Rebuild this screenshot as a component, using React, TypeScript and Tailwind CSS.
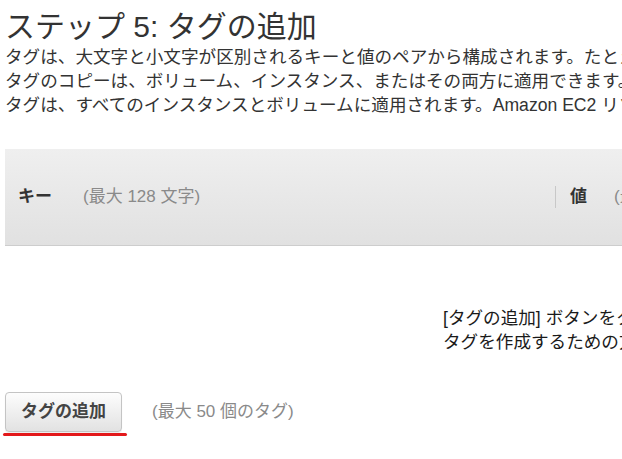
import React from 'react';

const font = { fontFamily: '"Liberation Sans", "Noto Sans CJK JP", sans-serif' };

const App: React.FC = () => {
  return (
    <div
      className="w-[622px] h-[459px] overflow-hidden bg-white text-[#333]"
      style={font}
    >
      {/* Heading */}
      <h1 className="pt-[9px] pl-[5px] text-[30px] leading-[36px] font-normal whitespace-nowrap text-[#333]">
        ステップ 5: タグの追加
      </h1>

      {/* Description */}
      <div className="pl-[5px] text-[17.6px] leading-[24px] whitespace-nowrap">
        <p>タグは、大文字と小文字が区別されるキーと値のペアから構成されます。たとえば、キーが Name で値が Webserver のタグを定義できます。</p>
        <p>タグのコピーは、ボリューム、インスタンス、またはその両方に適用できます。</p>
        <p>タグは、すべてのインスタンスとボリュームに適用されます。Amazon EC2 リソースのタグ付けの詳細をご覧ください。</p>
      </div>

      {/* Table header */}
      <div className="mt-[32px] ml-[5px] w-[1200px] h-[97px] flex items-center bg-linear-to-b from-[#efefef] to-[#e1e1e1] border-b border-[#cdcdcd] text-[17px] whitespace-nowrap">
        <div className="w-[550px] flex-none flex items-center pl-[13px]">
          <span className="font-bold text-[#333]">キー</span>
          <span className="ml-[31px] text-[#8a8a8a]">(最大 128 文字)</span>
        </div>
        <div className="h-[22px] border-l border-[#c8c8c8]" />
        <span className="ml-[14px] font-bold text-[#333]">値</span>
        <span className="ml-[27px] text-[#8a8a8a]">(最大 256 文字)</span>
      </div>

      {/* Empty state */}
      <div className="mt-[60px] pl-[443px] text-[17.6px] leading-[24px] whitespace-nowrap text-[#1a1a1a]">
        <p>[タグの追加] ボタンをクリックしてタグを追加するか、</p>
        <p>タグを作成するための方法をご覧ください。</p>
      </div>

      {/* Add tag */}
      <div className="mt-[38px] flex items-center">
        <button className="ml-[5px] w-[117px] h-[40px] rounded-[4px] border border-[#c4c4c4] bg-linear-to-b from-[#fdfdfd] to-[#e2e2e2] text-[17px] font-bold text-[#444] shadow-[0_1px_1px_rgba(0,0,0,0.08)]">
          タグの追加
        </button>
        <span className="ml-[30px] text-[17px] text-[#8a8a8a] whitespace-nowrap">(最大 50 個のタグ)</span>
      </div>
      <div className="mt-[1px] ml-[3px] w-[124px] h-[3px] rounded-full bg-[#e3191b]" />
    </div>
  );
};

export default App;
